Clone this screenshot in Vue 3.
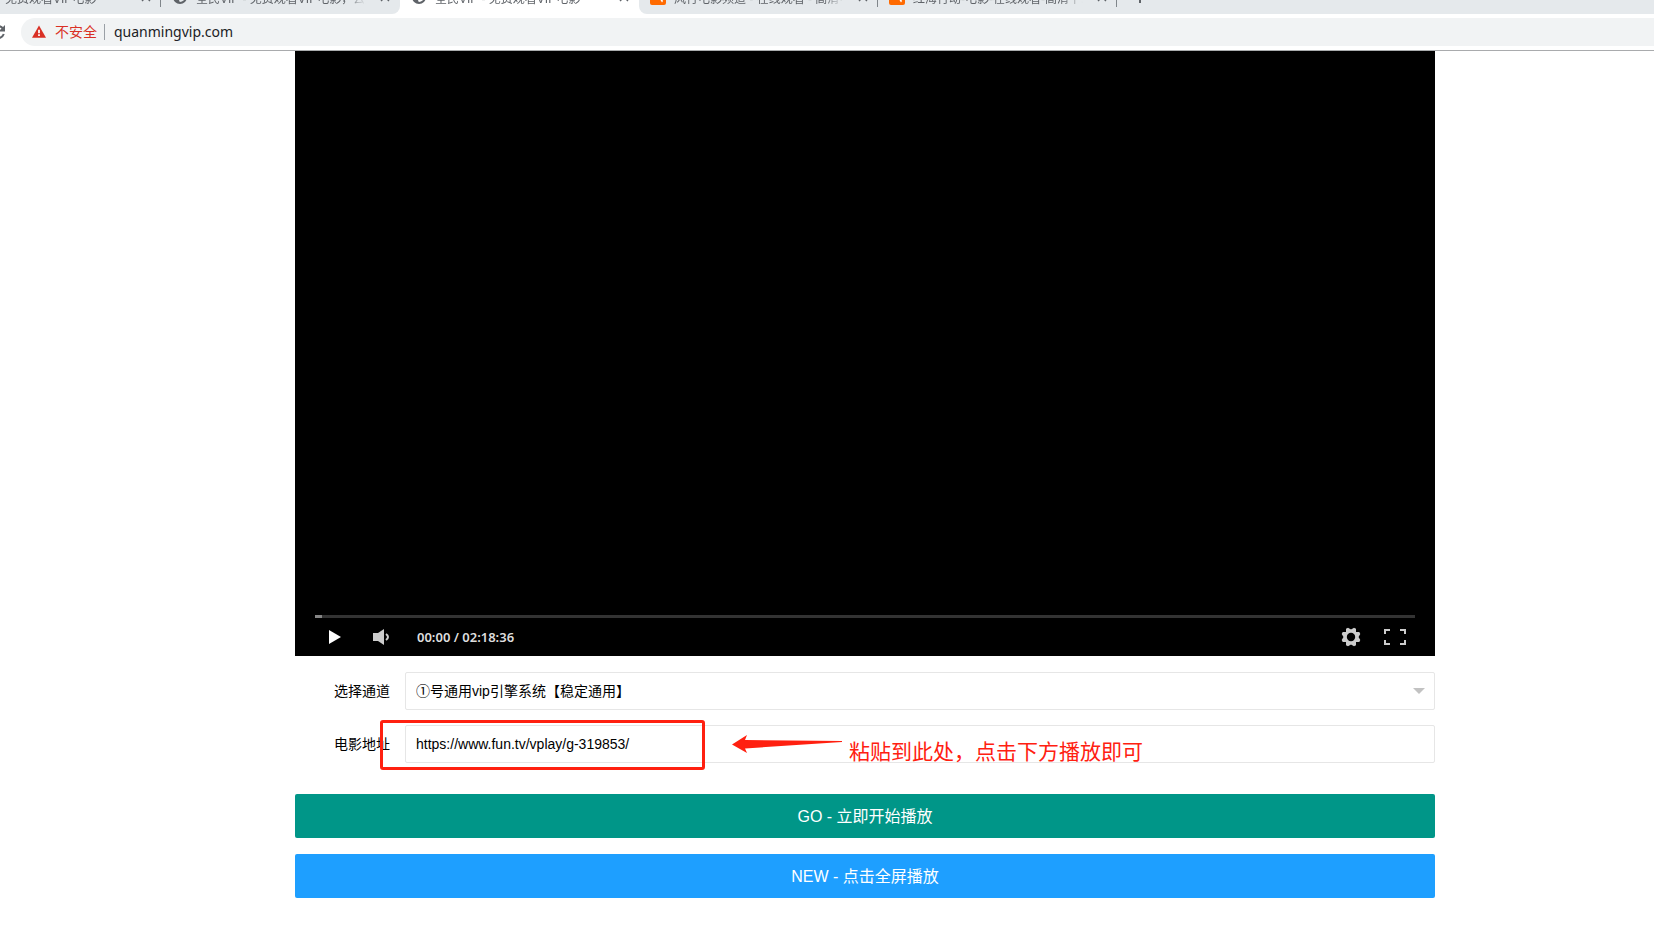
<script setup>
import { ref } from 'vue'

const leftTabs = [
  { id: 1, title: '免费观看VIP电影', kind: 'cut', sep: true },
  { id: 2, title: '全民VIP - 免费观看VIP电影，去广告', kind: 'globe', sep: false },
]
const activeTab = { title: '全民VIP - 免费观看VIP电影' }
const rightTabs = [
  { id: 4, title: '风行电影频道 - 在线观看 - 高清电影' },
  { id: 5, title: '红海行动-电影-在线观看-高清下载' },
]
const channels = ['①号通用vip引擎系统【稳定通用】']
const channel = ref(channels[0])
const address = ref('https://www.fun.tv/vplay/g-319853/')
</script>

<template>
  <div class="window">
    <header class="browser">
      <div class="strip">
        <div class="group left">
          <div v-for="t in leftTabs" :key="t.id" class="tab" :class="{ cut: t.kind === 'cut' }">
            <svg v-if="t.kind === 'globe'" class="fav" viewBox="0 0 16 16" aria-hidden="true">
              <circle cx="8" cy="8" r="6" fill="none" stroke="#5f6368" stroke-width="2" />
              <path d="M2 6l4 2 1 3 1 3-3-1-3-4zM8 2l5 2v3l-4-1z" fill="#5f6368" />
            </svg>
            <span class="title">{{ t.title }}</span>
            <button class="close" aria-label="关闭标签页">
              <svg viewBox="0 0 10 10"><path d="M1 1l8 8M9 1L1 9" stroke="#5f6368" stroke-width="1.4" /></svg>
            </button>
            <i v-if="t.sep" class="sep"></i>
          </div>
        </div>
        <div class="tab active">
          <svg class="fav" viewBox="0 0 16 16" aria-hidden="true">
            <circle cx="8" cy="8" r="6" fill="none" stroke="#5f6368" stroke-width="2" />
            <path d="M2 6l4 2 1 3 1 3-3-1-3-4zM8 2l5 2v3l-4-1z" fill="#5f6368" />
          </svg>
          <span class="title">{{ activeTab.title }}</span>
          <button class="close" aria-label="关闭标签页">
            <svg viewBox="0 0 10 10"><path d="M1 1l8 8M9 1L1 9" stroke="#5f6368" stroke-width="1.4" /></svg>
          </button>
        </div>
        <div class="group right">
          <div v-for="t in rightTabs" :key="t.id" class="tab">
            <svg class="fav low" viewBox="0 0 16 16" aria-hidden="true">
              <rect width="16" height="16" rx="2" fill="#ff6a00" />
              <path d="M4 4h8v6l1 2-1 1.500L10.500 11V6H4z" fill="#fff" />
            </svg>
            <span class="title">{{ t.title }}</span>
            <button class="close" aria-label="关闭标签页">
              <svg viewBox="0 0 10 10"><path d="M1 1l8 8M9 1L1 9" stroke="#5f6368" stroke-width="1.4" /></svg>
            </button>
            <i class="sep"></i>
          </div>
          <button class="plus" aria-label="新标签页">
            <svg viewBox="0 0 14 14"><path d="M7 0v14M0 7h14" stroke="#5f6368" stroke-width="2" /></svg>
          </button>
        </div>
      </div>
      <div class="toolbar">
        <button class="reload" aria-label="重新加载">
          <svg viewBox="0 0 16 16">
            <path d="M13 4.600A6 6 0 1 0 13.800 10" fill="none" stroke="#5f6368" stroke-width="2" />
            <path d="M15 1v6.500H8.500z" fill="#5f6368" />
          </svg>
        </button>
        <div class="omnibox">
          <svg class="warn" viewBox="0 0 16 14" aria-hidden="true">
            <path d="M8 0l8 14H0z" fill="#d93025" />
            <path d="M7 5h2v4H7zM7 10h2v2H7z" fill="#fff" />
          </svg>
          <span class="unsafe">不安全</span>
          <span class="host">quanmingvip.com</span>
        </div>
      </div>
    </header>

    <main class="page">
      <div class="container">
        <section class="player">
          <div class="track"><div class="buffered"></div></div>
          <div class="controls">
            <button class="play" aria-label="播放">
              <svg viewBox="0 0 12 14"><path d="M0 0l12 7-12 7z" fill="#fff" /></svg>
            </button>
            <button class="volume" aria-label="音量">
              <svg viewBox="0 0 17 16">
                <path d="M0 4h5L11 0v16l-6-4H0z" fill="#ccc" />
                <path d="M13 5q4 3 0 6" fill="none" stroke="#ccc" stroke-width="2" />
              </svg>
            </button>
            <span class="time">00:00 / 02:18:36</span>
            <button class="gear" aria-label="设置">
              <svg viewBox="-10 -10 20 20">
                <g fill="#ccc">
                  <path d="M-3-9.300L0-7.500 3-9.300 5-8.300V-5L8.300-5 9.300-3 7.500 0 9.300 3 8.300 5H5V8.300L3 9.300 0 7.500-3 9.300-5 8.300V5H-8.300L-9.300 3-7.500 0-9.300-3-8.300-5H-5V-8.300Z" />
                  <circle r="7.200" />
                </g>
                <circle r="4.200" fill="#000" />
              </svg>
            </button>
            <button class="full" aria-label="全屏">
              <svg viewBox="0 0 22 16">
                <path d="M1 5V1h5M16 1h5v4M21 11v4h-5M6 15H1v-4" fill="none" stroke="#ccc" stroke-width="2" />
              </svg>
            </button>
          </div>
        </section>

        <form class="form" @submit.prevent>
          <div class="row">
            <label for="channel">选择通道</label>
            <div class="field">
              <select id="channel" v-model="channel">
                <option v-for="c in channels" :key="c">{{ c }}</option>
              </select>
              <i class="caret"></i>
            </div>
          </div>
          <div class="row">
            <label for="address">电影地址</label>
            <div class="field">
              <input id="address" v-model="address" type="text" />
            </div>
            <div class="frame"></div>
            <div class="note">
              <svg viewBox="0 0 110 18" aria-hidden="true">
                <path d="M0 9.500L15 0l-2 5 97 1v1L13 13.500l2 4.500z" fill="#ff2010" />
              </svg>
              <span>粘贴到此处，点击下方播放即可</span>
            </div>
          </div>
          <button type="submit" class="btn go">GO - 立即开始播放</button>
          <button type="button" class="btn new">NEW - 点击全屏播放</button>
        </form>
      </div>
    </main>
  </div>
</template>

<style>
body {
  margin: 0;
  background: #fff;
}
</style>

<style scoped>
.window {
  font-family: "Liberation Sans", "Noto Sans CJK SC", sans-serif;
  font-size: 14px;
  color: #000;
}
.window * {
  box-sizing: border-box;
}
button {
  border: 0;
  padding: 0;
  background: none;
  font: inherit;
  cursor: pointer;
}
svg {
  display: block;
}

/* Browser chrome */
.strip {
  display: flex;
  align-items: flex-end;
  height: 14px;
  overflow: hidden;
}
.group {
  display: flex;
  align-items: flex-end;
  height: 34px;
  background: #e5e9ec;
}
.left {
  border-bottom-right-radius: 8px;
}
.right {
  flex: 1;
  border-bottom-left-radius: 8px;
}
.tab {
  position: relative;
  display: flex;
  align-items: center;
  flex: none;
  width: 239px;
  height: 34px;
  padding: 0 10px 0 11px;
  color: #5f6368;
  font-size: 12px;
}
.tab.cut {
  width: 161px;
  padding-left: 5px;
}
.fav {
  flex: none;
  width: 16px;
  height: 16px;
  margin-right: 8px;
}
.title {
  flex: 1;
  overflow: hidden;
  white-space: nowrap;
  margin-right: 14px;
  padding-top: 4px;
  line-height: 20px;
  mask-image: linear-gradient(to right, #000 calc(100% - 20px), transparent);
}
.close {
  flex: none;
  width: 10px;
  height: 10px;
}
.sep {
  position: absolute;
  right: 0;
  bottom: 7px;
  width: 1px;
  height: 20px;
  background: #80868b;
}
.plus {
  width: 14px;
  height: 14px;
  margin: 0 0 11px 16px;
}
.toolbar {
  display: flex;
  align-items: center;
  height: 37px;
  padding-bottom: 1px;
  border-bottom: 1px solid #a9abad;
}
.reload {
  flex: none;
  width: 16px;
  height: 16px;
  margin: 0 15px 0 -10px;
}
.reload svg {
  width: 16px;
}
.omnibox {
  display: flex;
  align-items: center;
  flex: 1;
  height: 28px;
  padding-left: 11px;
  border-radius: 14px 0 0 14px;
  background: #f1f3f4;
}
.warn {
  width: 14px;
  height: 13px;
  margin-right: 9px;
}
.unsafe {
  color: #d93025;
  line-height: 16px;
  padding-right: 7px;
  border-right: 1px solid #9aa0a6;
}
.host {
  padding-left: 9px;
  color: #202124;
  font-family: "Noto Sans", "Open Sans", sans-serif;
  line-height: 20px;
}

/* Page */
.page {
  padding-left: 76px;
}
.container {
  max-width: 1140px;
  margin: 0 auto;
}
.player {
  display: flex;
  flex-direction: column;
  justify-content: flex-end;
  height: 605px;
  padding: 0 20px;
  background: #000;
}
.track {
  height: 3px;
  background: #333;
}
.buffered {
  width: 7px;
  height: 3px;
  background: #858585;
}
.controls {
  display: flex;
  align-items: center;
  height: 38px;
  padding: 0 9px 0 14px;
}
.play {
  width: 12px;
  margin-right: 32px;
}
.volume {
  width: 17px;
  margin-right: 27px;
}
.time {
  flex: 1;
  color: #ddd;
  font-family: "Noto Sans", "Open Sans", sans-serif;
  font-size: 13px;
  font-weight: 600;
}
.gear {
  width: 20px;
  margin-right: 23px;
}
.full {
  width: 22px;
}
.form {
  padding-top: 16px;
}
.row {
  position: relative;
  display: flex;
  margin-bottom: 15px;
}
label {
  flex: none;
  width: 110px;
  padding: 9px 15px;
  line-height: 20px;
  text-align: right;
}
.field {
  position: relative;
  flex: 1;
}
select,
input {
  display: block;
  width: 100%;
  height: 38px;
  padding: 0 10px;
  border: 1px solid #e6e6e6;
  border-radius: 2px;
  outline: 0;
  background: #fff;
  color: #000;
  font: inherit;
  appearance: none;
}
.caret {
  position: absolute;
  top: 16px;
  right: 10px;
  border: 6px solid transparent;
  border-top-color: #c2c2c2;
  border-bottom-width: 0;
  pointer-events: none;
}
.frame {
  position: absolute;
  top: -5px;
  left: 85px;
  width: 325px;
  height: 50px;
  border: 3px solid #ff2010;
  border-radius: 3px;
  pointer-events: none;
}
.note {
  position: absolute;
  top: 10px;
  left: 437px;
  display: flex;
  align-items: flex-start;
  gap: 7px;
  color: #ff2010;
  font-size: 21px;
  line-height: 34px;
  white-space: nowrap;
  pointer-events: none;
}
.note svg {
  width: 110px;
  height: 18px;
}
.btn {
  display: block;
  width: 100%;
  height: 44px;
  padding-bottom: 3px;
  border-radius: 2px;
  color: #fff;
  font-size: 16px;
}
.go {
  margin-top: 31px;
  background: #009688;
}
.new {
  margin-top: 16px;
  background: #1e9fff;
}
</style>
